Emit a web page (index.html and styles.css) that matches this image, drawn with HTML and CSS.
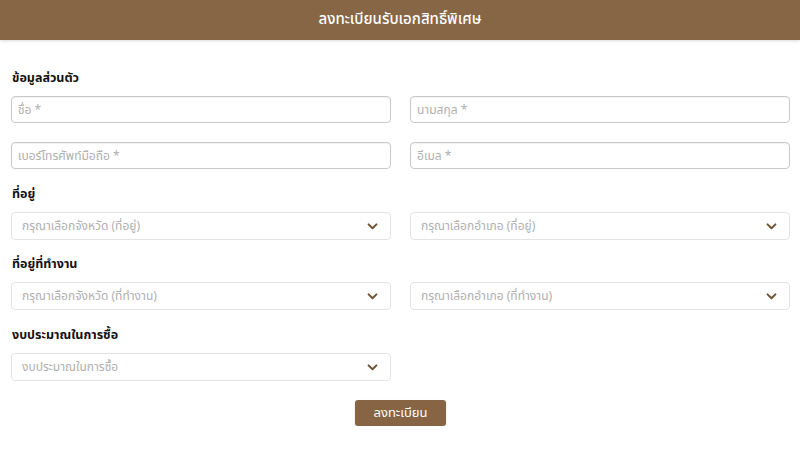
FILE: index.html
```html
<!DOCTYPE html>
<html lang="th">
<head>
    <meta charset="UTF-8">
    <meta name="viewport" content="width=device-width, initial-scale=1.0">
    <title>ลงทะเบียนรับเอกสิทธิ์พิเศษ</title>
    <link rel="stylesheet" href="styles.css">
</head>
<body>
    <header class="topbar">ลงทะเบียนรับเอกสิทธิ์พิเศษ</header>

    <form class="register-form">
        <h3 class="section-title">ข้อมูลส่วนตัว</h3>
        <div class="field-grid">
            <input type="text" class="text-input" placeholder="ชื่อ *">
            <input type="text" class="text-input" placeholder="นามสกุล *">
            <input type="tel" class="text-input" placeholder="เบอร์โทรศัพท์มือถือ *">
            <input type="email" class="text-input" placeholder="อีเมล *">
        </div>

        <h3 class="section-title">ที่อยู่</h3>
        <div class="field-grid">
            <div class="select-wrap">
                <select class="select-input"><option>กรุณาเลือกจังหวัด (ที่อยู่)</option></select>
                <svg class="chevron" viewBox="0 0 12 8" width="11" height="7"><path d="M1.5 1.5 6 6l4.5-4.5" fill="none" stroke="#6f5030" stroke-width="2.2" stroke-linecap="round" stroke-linejoin="round"/></svg>
            </div>
            <div class="select-wrap">
                <select class="select-input"><option>กรุณาเลือกอำเภอ (ที่อยู่)</option></select>
                <svg class="chevron" viewBox="0 0 12 8" width="11" height="7"><path d="M1.5 1.5 6 6l4.5-4.5" fill="none" stroke="#6f5030" stroke-width="2.2" stroke-linecap="round" stroke-linejoin="round"/></svg>
            </div>
        </div>

        <h3 class="section-title">ที่อยู่ที่ทำงาน</h3>
        <div class="field-grid">
            <div class="select-wrap">
                <select class="select-input"><option>กรุณาเลือกจังหวัด (ที่ทำงาน)</option></select>
                <svg class="chevron" viewBox="0 0 12 8" width="11" height="7"><path d="M1.5 1.5 6 6l4.5-4.5" fill="none" stroke="#6f5030" stroke-width="2.2" stroke-linecap="round" stroke-linejoin="round"/></svg>
            </div>
            <div class="select-wrap">
                <select class="select-input"><option>กรุณาเลือกอำเภอ (ที่ทำงาน)</option></select>
                <svg class="chevron" viewBox="0 0 12 8" width="11" height="7"><path d="M1.5 1.5 6 6l4.5-4.5" fill="none" stroke="#6f5030" stroke-width="2.2" stroke-linecap="round" stroke-linejoin="round"/></svg>
            </div>
        </div>

        <h3 class="section-title">งบประมาณในการซื้อ</h3>
        <div class="field-grid">
            <div class="select-wrap">
                <select class="select-input"><option>งบประมาณในการซื้อ</option></select>
                <svg class="chevron" viewBox="0 0 12 8" width="11" height="7"><path d="M1.5 1.5 6 6l4.5-4.5" fill="none" stroke="#6f5030" stroke-width="2.2" stroke-linecap="round" stroke-linejoin="round"/></svg>
            </div>
        </div>

        <div class="actions">
            <button type="button" class="submit-btn">ลงทะเบียน</button>
        </div>
    </form>
</body>
</html>
```

FILE: styles.css
```css
body {
    margin: 0;
    padding: 0;
    font-family: "Noto Sans Thai", "Noto Sans", "DejaVu Sans", sans-serif;
    background: #fff;
    color: #222;
}
.topbar {
    height: 40px;
    line-height: 40px;
    background: #876646;
    color: #fff;
    text-align: center;
    font-size: 15px;
    font-weight: 500;
    box-shadow: 0 1px 3px rgba(0, 0, 0, 0.15);
}
.register-form {
    padding: 30px 10px 0 11px;
}
.section-title {
    margin: 16.5px 0 8px 1px;
    font-size: 12.5px;
    font-weight: 700;
    line-height: 18px;
    color: #111;
}
.section-title:first-child {
    margin-top: 0;
}
.field-grid {
    display: grid;
    grid-template-columns: 380px 380px;
    column-gap: 19px;
    row-gap: 19px;
}
.text-input {
    box-sizing: border-box;
    height: 27px;
    width: 100%;
    margin: 0;
    padding: 0 6px;
    border: 1px solid #c9c9c9;
    border-radius: 4px;
    box-shadow: inset 0 1px 1px rgba(0, 0, 0, 0.05);
    font-family: inherit;
    font-size: 12px;
    color: #333;
}
.text-input::placeholder {
    color: #b0b0b0;
}
.select-wrap {
    position: relative;
}
.select-input {
    appearance: none;
    -webkit-appearance: none;
    box-sizing: border-box;
    width: 100%;
    height: 28px;
    margin: 0;
    padding: 0 10px;
    border: 1px solid #e3e3e3;
    border-radius: 4px;
    background: #fff;
    font-family: inherit;
    font-size: 12px;
    color: #b0b0b0;
}
.chevron {
    position: absolute;
    right: 13px;
    top: 11px;
    pointer-events: none;
}
.actions {
    display: flex;
    justify-content: center;
    margin-top: 19px;
}
.submit-btn {
    width: 91px;
    height: 26px;
    border: none;
    border-radius: 3px;
    background: #876544;
    color: #fff;
    font-family: inherit;
    font-size: 13px;
    cursor: pointer;
    box-shadow: 0 1px 2px rgba(0, 0, 0, 0.15);
}
```
